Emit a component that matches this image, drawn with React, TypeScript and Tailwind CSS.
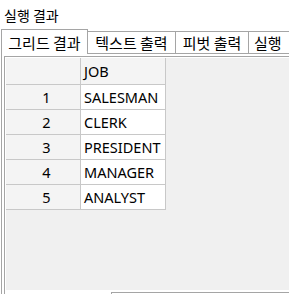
import React from "react";

const rows = ["SALESMAN", "CLERK", "PRESIDENT", "MANAGER", "ANALYST"];

export default function App() {
  return (
    <div className="w-[289px] h-[294px] bg-white overflow-hidden flex flex-col font-['Noto_Sans_CJK_KR',sans-serif] text-black">
      <div className="h-[29px] pl-[4px] pt-[5px] text-[14px] leading-[20px] shrink-0">실행 결과</div>
      <div className="ml-[1px] flex flex-col flex-1 min-h-0">
        <div className="flex items-end h-[24px] shrink-0">
          <div className="relative z-10 -mb-[1px] h-[25px] w-[87px] shrink-0 border-l border-t border-r border-[#a5a5a5] bg-white text-center pt-[3px] text-[15px] leading-[20px] whitespace-nowrap">
            그리드 결과
          </div>
          <div className="h-[22px] w-[88px] shrink-0 border-t border-r border-[#a5a5a5] bg-white text-center pt-[1px] text-[15px] leading-[20px] whitespace-nowrap">
            텍스트 출력
          </div>
          <div className="h-[22px] w-[73px] shrink-0 border-t border-r border-[#a5a5a5] bg-white text-center pt-[1px] text-[15px] leading-[20px] whitespace-nowrap">
            피벗 출력
          </div>
          <div className="h-[22px] w-[60px] shrink-0 border-t border-r border-[#a5a5a5] bg-white pl-[5px] pt-[1px] text-[15px] leading-[20px] whitespace-nowrap">
            실행
          </div>
        </div>
        <div className="flex-1 min-h-0 border-l border-t border-[#a5a5a5] pl-[2px] pt-[2px] flex flex-col">
          <div className="flex-1 min-h-0 border-l border-t border-[#a5a5a5] pl-[1px] pt-[1px] bg-white flex flex-col">
            <div className="flex-1 min-h-0 bg-[#f0f0f0] font-['Noto_Sans',sans-serif] text-[14.5px]">
              <div className="flex h-[27px] border-b border-[#c8c8c8] w-[160px]">
                <div className="w-[75px] shrink-0 border-r border-[#c8c8c8] bg-[#f4f4f4]" />
                <div className="w-[85px] shrink-0 border-r border-[#c8c8c8] bg-[#f4f4f4] pl-[3px] pt-[3px] leading-[20px]">JOB</div>
              </div>
              {rows.map((r, i) => (
                <div key={r} className="flex h-[25px] border-b border-[#c8c8c8] w-[160px]">
                  <div className="w-[75px] shrink-0 border-r border-[#c8c8c8] bg-[#f4f4f4] text-center pl-[7px] pt-[2px] leading-[20px]">
                    {i + 1}
                  </div>
                  <div className="w-[85px] shrink-0 border-r border-[#c8c8c8] bg-white pl-[3px] pt-[2px] leading-[20px] whitespace-nowrap">
                    {r}
                  </div>
                </div>
              ))}
            </div>
            <div className="h-[4px] shrink-0 bg-white pt-[2px] pl-[105px]">
              <div className="h-[2px] border-t border-l border-[#a5a5a5]" />
            </div>
          </div>
        </div>
      </div>
    </div>
  );
}
